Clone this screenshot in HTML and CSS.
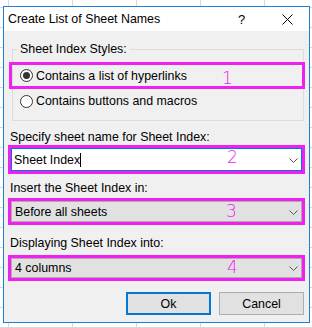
FILE: index.html
```html
<!DOCTYPE html>
<html>
<head>
<meta charset="utf-8">
<link rel="stylesheet" href="styles.css">
</head>
<body>
<div class="dialog">
  <div class="titlebar">
    <span class="title">Create List of Sheet Names</span>
    <span class="help">?</span>
    <svg class="close" width="11" height="11" viewBox="0 0 11 11"><path d="M0.5 0.5L10.5 10.5M10.5 0.5L0.5 10.5" stroke="#000" stroke-width="1"/></svg>
  </div>
  <div class="body">
    <div class="group">
      <span class="group-title">Sheet Index Styles:</span>
      <div class="radio-row annot first">
        <span class="radio checked"></span>
        <span class="radio-label">Contains a list of hyperlinks</span>
        <span class="num n1">1</span>
      </div>
      <div class="radio-row second">
        <span class="radio"></span>
        <span class="radio-label">Contains buttons and macros</span>
      </div>
    </div>

    <div class="label l1">Specify sheet name for Sheet Index:</div>
    <div class="annot box b2">
      <div class="field input">
        <span class="value">Sheet Index</span><span class="caret"></span>
        <span class="num n2">2</span>
        <svg class="chev" width="9" height="5" viewBox="0 0 9 5"><path d="M0.5 0.5L4.5 4.5L8.5 0.5" fill="none" stroke="#555" stroke-width="1"/></svg>
      </div>
    </div>

    <div class="label l2">Insert the Sheet Index in:</div>
    <div class="annot box b3">
      <div class="field combo">
        <span class="value">Before all sheets</span>
        <span class="num n3">3</span>
        <svg class="chev" width="9" height="5" viewBox="0 0 9 5"><path d="M0.5 0.5L4.5 4.5L8.5 0.5" fill="none" stroke="#555" stroke-width="1"/></svg>
      </div>
    </div>

    <div class="label l3">Displaying Sheet Index into:</div>
    <div class="annot box b4">
      <div class="field combo">
        <span class="value">4 columns</span>
        <span class="num n4">4</span>
        <svg class="chev" width="9" height="5" viewBox="0 0 9 5"><path d="M0.5 0.5L4.5 4.5L8.5 0.5" fill="none" stroke="#555" stroke-width="1"/></svg>
      </div>
    </div>

    <div class="buttons">
      <div class="btn default">Ok</div>
      <div class="btn">Cancel</div>
    </div>
  </div>
</div>
</body>
</html>
```
FILE: styles.css
```css
html, body {
  margin: 0;
  padding: 0;
}
body {
  width: 312px;
  height: 328px;
  overflow: hidden;
  font-family: "Liberation Sans", Arial, sans-serif;
  font-size: 12.4px;
  color: #000;
  background-color: #fff;
  background-image:
    linear-gradient(to right, transparent 8px, #d8d8d8 8px, #d8d8d8 9px, transparent 9px),
    linear-gradient(to bottom, transparent 7px, #d8d8d8 7px, #d8d8d8 8px, transparent 8px);
  background-size: 64px 100%, 100% 20px;
  padding-top: 6px;
  box-sizing: border-box;
}
.dialog {
  margin-left: 3px;
  width: 307px;
  height: 317px;
  box-sizing: border-box;
  border: 1px solid #1c7fd4;
  background: #f0f0f0;
  display: flex;
  flex-direction: column;
}
.titlebar {
  height: 24px;
  background: #fff;
  display: flex;
  align-items: center;
  padding-left: 4px;
  flex: none;
}
.title {
  flex: 1;
  font-size: 12.4px;
  line-height: 16px;
}
.help {
  width: 10px;
  margin-right: 34px;
  font-size: 13px;
}
.close {
  margin-right: 16px;
}
.body {
  flex: 1;
  display: flex;
  flex-direction: column;
}
.group {
  margin: 18px 5px 0 8px;
  border: 1px solid #dcdcdc;
  padding-bottom: 7px;
  display: flex;
  flex-direction: column;
}
.group-title {
  align-self: flex-start;
  margin: -9px 0 0 4px;
  padding: 0 3px;
  background: #f0f0f0;
  line-height: 16px;
}
.radio-row {
  display: flex;
  align-items: center;
  position: relative;
}
.radio-row.first {
  margin: 5px -2px 0 -4px;
  height: 27px;
  box-sizing: border-box;
  padding-left: 8px;
}
.radio-row.second {
  height: 24px;
  padding-left: 7px;
}
.annot {
  border: 3px solid #f020f0;
}
.radio {
  width: 13px;
  height: 13px;
  box-sizing: border-box;
  border: 1px solid #333;
  border-radius: 50%;
  background: #fff;
  display: flex;
  align-items: center;
  justify-content: center;
  flex: none;
}
.radio.checked::after {
  content: "";
  width: 7px;
  height: 7px;
  border-radius: 50%;
  background: #333;
}
.radio-label {
  margin-left: 3px;
  line-height: 16px;
}
.num {
  position: absolute;
  font-family: "DejaVu Sans", sans-serif;
  font-weight: 200;
  font-size: 17px;
  line-height: 17px;
  color: #f020f0;
}
.n1 { left: 210px; top: 5px; }
.label {
  margin-left: 6px;
  line-height: 16px;
}
.l1 { margin-top: 8px; }
.l2 { margin-top: 6px; }
.l3 { margin-top: 10px; }
.box {
  margin-left: 4px;
  width: 297px;
  box-sizing: border-box;
}
.b2 { margin-top: 0; height: 29px; }
.b3 { margin-top: 2px; height: 27px; }
.b4 { margin-top: 4px; height: 26px; }
.field {
  height: 100%;
  box-sizing: border-box;
  display: flex;
  align-items: center;
  position: relative;
  padding-left: 3px;
}
.input {
  background: #fff;
  border: 1px solid #0078d7;
  padding-left: 2px;
}
.combo {
  background: #e1e1e1;
  border: 1px solid #adadad;
}
.value {
  line-height: 16px;
}
.caret {
  width: 1px;
  height: 14px;
  background: #000;
}
.chev {
  position: absolute;
  right: 3px;
  top: 50%;
  margin-top: -2px;
}
.n2 { left: 215px; top: 0; }
.n3 { left: 214px; top: 1px; }
.n4 { left: 215px; top: 0; }
.buttons {
  margin-top: 11px;
  display: flex;
  justify-content: flex-end;
  gap: 8px;
  padding-right: 5px;
}
.btn {
  width: 85px;
  height: 23px;
  box-sizing: border-box;
  background: #e1e1e1;
  border: 1px solid #adadad;
  display: flex;
  align-items: center;
  justify-content: center;
  line-height: 16px;
}
.btn.default {
  border: 2px solid #0078d7;
}
```
